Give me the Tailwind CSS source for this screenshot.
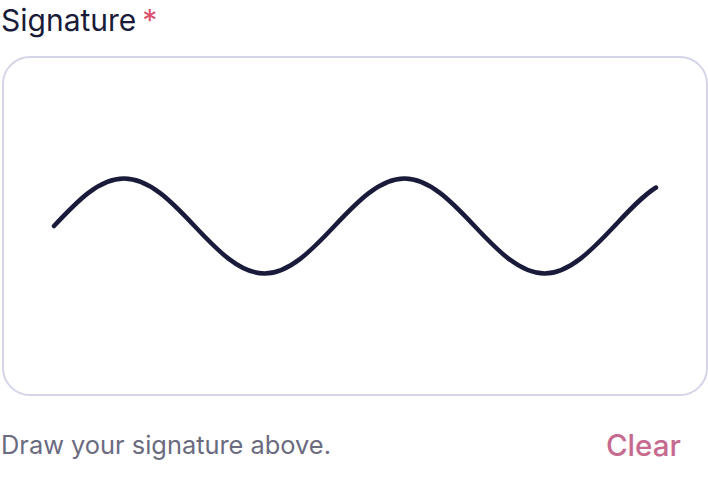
<html lang="en">
  <head>
    <meta charset="utf-8" />
    <title>Signature</title>
    <script src="https://cdn.jsdelivr.net/npm/@tailwindcss/browser@4"></script>
  </head>
  <body class="bg-white font-['Inter',sans-serif] overflow-hidden">
    <div class="w-[708px] h-[486px] pl-[1px]">
      <!-- Label -->
      <div class="flex items-center gap-[6px] h-[40px] text-[30px] leading-[40px] text-[#1a1b3a]">
        <span>Signature</span>
        <span class="text-[#dc4f6e]">*</span>
      </div>

      <!-- Signature pad -->
      <div class="mt-[16px] ml-[1px] h-[340px] border-2 border-[#d4d5e8] rounded-[28px] bg-white">
        <svg width="704" height="336" viewBox="4 58 704 336" fill="none">
          <path
            d="M54 226 C76.8 201.7 98.7 178.5 124 178.5 S171.7 201.7 194.5 226 S239.8 273.5 264.5 273.5 S311.7 250.3 334.5 226 S379.8 178.5 404.5 178.5 S451.7 201.7 474.5 226 S519.8 273.5 544.5 273.5 S591.7 250.3 614.5 226 C628.5 211.1 642 196.3 656 187.5"
            stroke="#1a1b3a"
            stroke-width="4.5"
            stroke-linecap="round"
            stroke-linejoin="round"
          />
        </svg>
      </div>

      <!-- Footer -->
      <div class="mt-[29px] flex items-center justify-between pr-[27px] h-[40px]">
        <p class="text-[25.4px] leading-[40px] text-[#6b6b80]">Draw your signature above.</p>
        <button class="text-[29.6px] leading-[40px] font-medium text-[#c76a90]">Clear</button>
      </div>
    </div>
  </body>
</html>
